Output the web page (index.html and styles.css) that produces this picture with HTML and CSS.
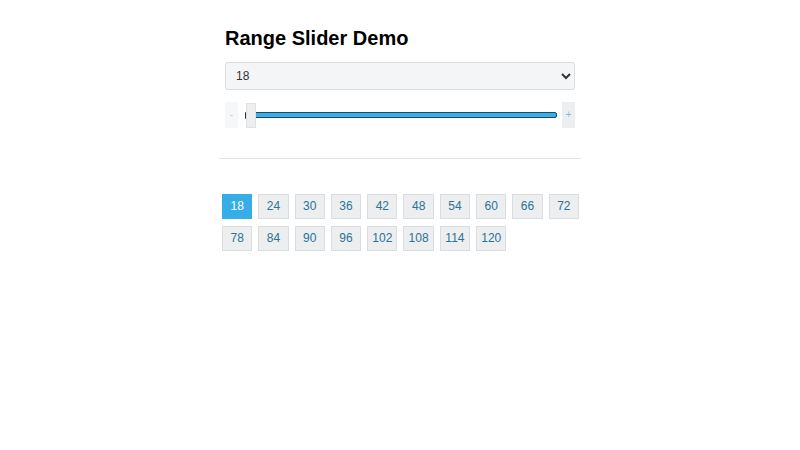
FILE: index.html
```html
<!DOCTYPE html>
<html>
<head>
<meta charset="utf-8">
<link rel="stylesheet" href="styles.css">
</head>
<body>
<div class="container">
  <h1 class="title">Range Slider Demo</h1>
  <div class="select-wrap">
    <select class="size-select">
      <option>18</option>
    </select>
  </div>
  <div class="slider-row">
    <button class="step step-minus">-</button>
    <div class="track-area">
      <div class="track"></div>
      <div class="thumb-mark"></div>
      <div class="handle"></div>
    </div>
    <button class="step step-plus">+</button>
  </div>
  <hr class="divider">
  <div class="chips">
    <button class="chip active">18</button>
    <button class="chip">24</button>
    <button class="chip">30</button>
    <button class="chip">36</button>
    <button class="chip">42</button>
    <button class="chip">48</button>
    <button class="chip">54</button>
    <button class="chip">60</button>
    <button class="chip">66</button>
    <button class="chip">72</button>
    <button class="chip">78</button>
    <button class="chip">84</button>
    <button class="chip">90</button>
    <button class="chip">96</button>
    <button class="chip">102</button>
    <button class="chip">108</button>
    <button class="chip">114</button>
    <button class="chip">120</button>
  </div>
</div>
</body>
</html>
```
FILE: styles.css
```css
html, body {
  margin: 0;
  padding: 0;
  background: #fff;
  font-family: "Liberation Sans", Arial, sans-serif;
}
.container {
  width: 364px;
  margin: 0 auto;
  padding-top: 26px;
}
.title {
  margin: 0 7px;
  font-size: 20px;
  line-height: 24px;
  font-weight: bold;
  color: #000;
}
.select-wrap {
  margin: 12px 7px 0;
}
.size-select {
  display: block;
  width: 350px;
  height: 28px;
  box-sizing: border-box;
  padding: 0 6px 0 6px;
  border: 1px solid #dcdfe1;
  border-radius: 2px;
  background: #f3f5f6;
  color: #333;
  font-family: "Liberation Sans", Arial, sans-serif;
  font-size: 12px;
}
.slider-row {
  display: flex;
  align-items: stretch;
  margin: 12px 7px 0;
  height: 26px;
}
.step {
  width: 13px;
  padding: 0;
  border: none;
  font-family: "Liberation Sans", Arial, sans-serif;
  font-size: 10px;
  line-height: 26px;
}
.step-minus {
  background: #f6f7f8;
  color: #c8cccf;
}
.step-plus {
  background: #eceef0;
  color: #7bbfd9;
}
.track-area {
  flex: 1;
  position: relative;
  margin: 0 5px 0 7px;
  display: flex;
  align-items: center;
}
.track {
  margin-left: 5px;
  flex: 1;
  height: 4px;
  background: #3aaee6;
  border: 1px solid #1f4a66;
  border-radius: 2px;
}
.thumb-mark {
  position: absolute;
  left: 0;
  top: 10px;
  width: 2px;
  height: 7px;
  background: #333;
  border-radius: 1px;
}
.handle {
  position: absolute;
  left: 1px;
  top: 1px;
  bottom: 0;
  width: 10px;
  background: #eceeef;
  border: 1px solid #dfe2e3;
  box-sizing: border-box;
}
.divider {
  margin: 30px 1px 0;
  border: none;
  border-top: 1px solid #e2e4e5;
  height: 0;
}
.chips {
  display: flex;
  flex-wrap: wrap;
  padding: 32px 0 0 1px;
}
.chip {
  width: 30.3px;
  height: 25px;
  margin: 3px 3px 4px;
  padding: 0;
  box-sizing: border-box;
  border: 1px solid #dadddf;
  background: #eceeef;
  color: #2a7396;
  font-family: "Liberation Sans", Arial, sans-serif;
  font-size: 12px;
  line-height: 23px;
  text-align: center;
}
.chip.active {
  background: #36ade6;
  border-color: #36ade6;
  color: #fff;
}
```
